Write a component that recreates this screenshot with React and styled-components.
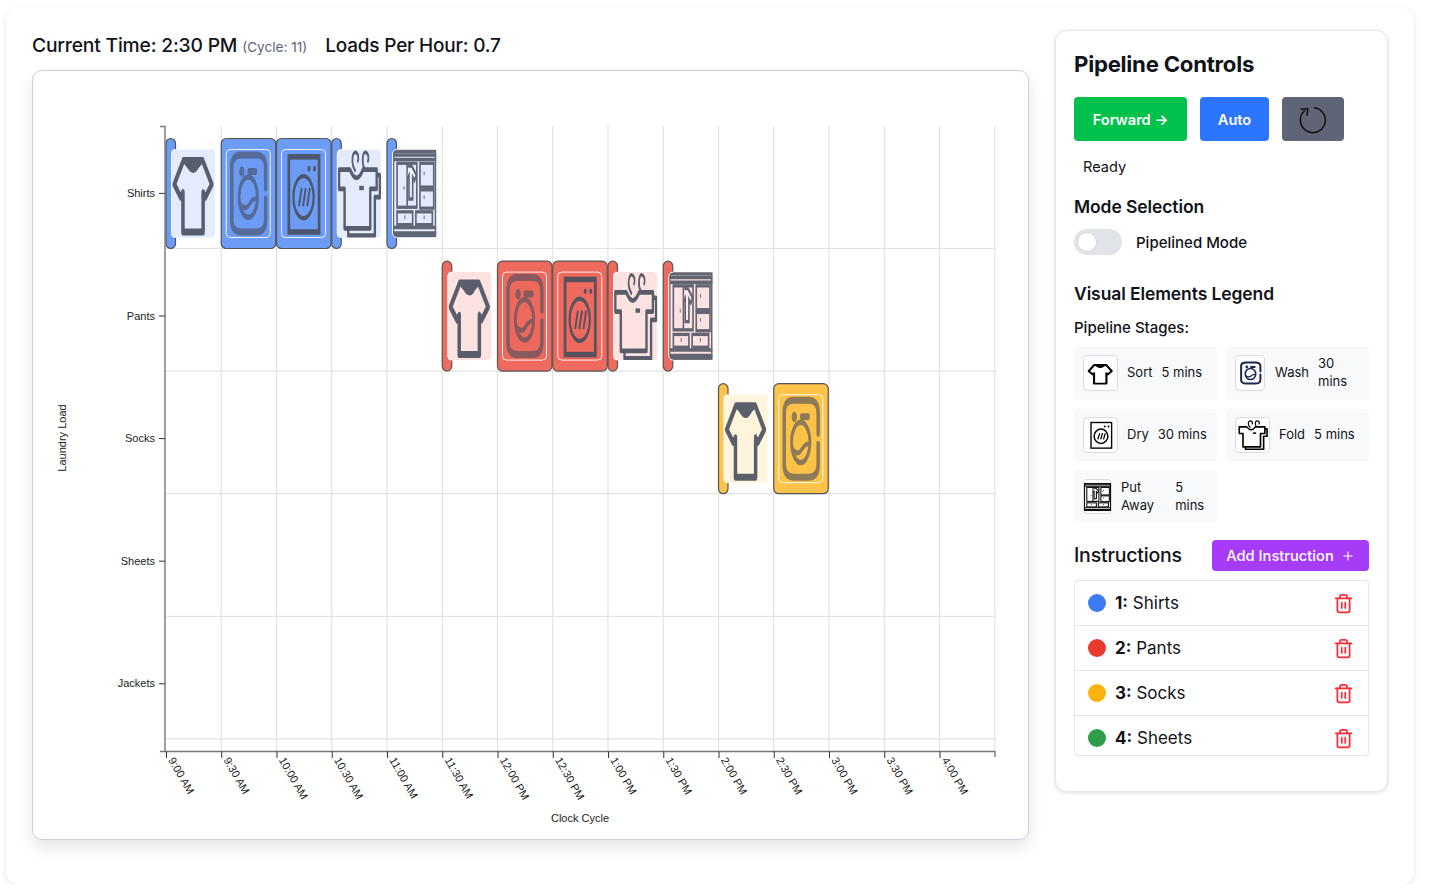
import React from "react";
import styled, { createGlobalStyle } from "styled-components";
import { Trash2, Plus } from "lucide-react";

const GlobalStyle = createGlobalStyle`
  html, body { margin: 0; padding: 0; background: #fff; }
  body { font-family: Inter, "Liberation Sans", sans-serif; color: #111318; overflow: hidden; }
`;

const Shell = styled.div`
  width: 1408px;
  height: 876px;
  margin: 8px 0 0 6px;
  padding: 22px 26px 0;
  box-sizing: border-box;
  display: grid;
  grid-template-columns: 997px 333px;
  column-gap: 26px;
  align-items: start;
  border-radius: 12px;
  background: #fff;
  box-shadow: 0 2px 6px rgba(0, 0, 0, 0.1);
`;

const Left = styled.div`
  display: flex;
  flex-direction: column;
`;

const StatusRow = styled.div`
  height: 40px;
  box-sizing: border-box;
  padding-bottom: 10px;
  display: flex;
  align-items: center;
  gap: 18px;
  font-size: 19.3px;
  letter-spacing: -0.2px;
  font-weight: 500;
  white-space: nowrap;
`;

const Cycle = styled.span`
  font-size: 13.6px;
  letter-spacing: 0;
  font-weight: 400;
  color: #5b6478;
  margin-left: 5px;
`;

const LoadsRate = styled.span`
  font-size: 19px;
`;

const ChartCard = styled.div`
  height: 770px;
  box-sizing: border-box;
  border: 1px solid #ccd0da;
  border-radius: 10px;
  background: #fff;
  box-shadow: 0 8px 16px rgba(0, 0, 0, 0.1);
`;

const ChartSvg = styled.svg`
  display: block;
  width: 995px;
  height: 767px;
`;

const Panel = styled.aside`
  height: 762px;
  box-sizing: border-box;
  padding: 18px 18px 0;
  border: 1px solid #e5e7eb;
  border-radius: 12px;
  background: #fff;
  box-shadow: 0 1px 4px rgba(0, 0, 0, 0.12);
`;

const Title = styled.h2`
  margin: 0;
  height: 30px;
  line-height: 30px;
  font-size: 22.2px;
  letter-spacing: -0.25px;
  font-weight: 700;
`;

const ButtonRow = styled.div`
  display: flex;
  gap: 13px;
  margin-top: 18px;
`;

const ActionButton = styled.button`
  width: ${(p) => p.$w}px;
  height: 44px;
  padding: 1px 0 0;
  display: flex;
  align-items: center;
  justify-content: center;
  border: none;
  border-radius: 4px;
  background: ${(p) => p.$bg};
  color: #fff;
  font-family: inherit;
  font-size: 14.6px;
  line-height: 20px;
  font-weight: 600;
`;

const StatusText = styled.div`
  margin: 16px 0 0 9px;
  line-height: 20px;
  font-size: 14.6px;
`;

const SectionTitle = styled.h3`
  margin: ${(p) => p.$top}px 0 0;
  line-height: 24px;
  font-size: 17.5px;
  letter-spacing: -0.1px;
  font-weight: 600;
`;

const ToggleRow = styled.div`
  display: flex;
  align-items: center;
  gap: 14px;
  margin-top: 10px;
  font-size: 15px;
  font-weight: 500;
`;

const ToggleTrack = styled.div`
  width: 48px;
  height: 26px;
  border-radius: 13px;
  background: #e0e3e8;
  display: flex;
  align-items: center;
  padding-left: 3px;
  box-sizing: border-box;
`;

const ToggleKnob = styled.div`
  width: 20px;
  height: 20px;
  border-radius: 50%;
  background: #fff;
  border: 1px solid #d4d7de;
  box-sizing: border-box;
`;

const SubTitle = styled.div`
  margin-top: 12px;
  line-height: 20px;
  font-size: 15px;
  font-weight: 500;
`;

const LegendGrid = styled.div`
  display: grid;
  grid-template-columns: 143px 143px;
  column-gap: 9px;
  row-gap: 9px;
  margin-top: 9px;
`;

const LegendItem = styled.div`
  height: 52.7px;
  box-sizing: border-box;
  padding: 0 9px;
  display: flex;
  align-items: center;
  border-radius: 4px;
  background: #f8f9fb;
  font-size: 13px;
  line-height: 18px;
`;

const IconBox = styled.div`
  width: ${(p) => p.$w}px;
  height: ${(p) => p.$h || 36}px;
  flex: none;
  box-sizing: border-box;
  display: flex;
  align-items: center;
  justify-content: center;
  margin-right: ${(p) => p.$gap}px;
  border: 1px solid #d9dce3;
  border-radius: 4px;
  background: #fff;
`;

const LegendName = styled.span`
  margin: 0 ${(p) => p.$gap}px 2px 0;
`;

const LegendTime = styled.span`
  margin-bottom: 2px;
`;

const InstructionsHead = styled.div`
  margin-top: 17px;
  display: flex;
  align-items: center;
  justify-content: space-between;
`;

const InstructionsTitle = styled.span`
  margin-bottom: 2px;
  font-size: 19.5px;
  font-weight: 500;
  letter-spacing: -0.2px;
`;

const AddButton = styled.button`
  width: 157px;
  height: 31px;
  padding: 0;
  display: flex;
  align-items: center;
  justify-content: center;
  gap: 7px;
  border: none;
  border-radius: 4px;
  background: #a63cf7;
  color: #fff;
  font-family: inherit;
  font-size: 14.7px;
  font-weight: 500;
`;

const InstructionList = styled.div`
  margin-top: 9px;
  height: 176px;
  box-sizing: border-box;
  overflow: hidden;
  border: 1px solid #e2e4ea;
  border-radius: 4px;
`;

const InstructionRow = styled.div`
  height: ${(p) => (p.$first ? 44 : 45)}px;
  box-sizing: border-box;
  padding: 0 14px 0 13px;
  display: flex;
  align-items: center;
  border-top: ${(p) => (p.$first ? "none" : "1px solid #e2e4ea")};
  font-size: 17px;
`;

const Dot = styled.span`
  width: 18px;
  height: 18px;
  border-radius: 50%;
  background: ${(p) => p.$color};
  margin-right: 9px;
`;

const RowLabel = styled.span`
  flex: 1;
  b { font-weight: 700; }
`;

// icons are drawn on a 48x48 box and stretched inside the chart cells
function ShirtIcon({ color = "#000", fill = "none" }) {
  return (
    <g fill={fill} stroke={color} strokeWidth="3.8" strokeLinejoin="round">
      <path d="M13 6H34L44 19L37 26L34.5 23.5V45H12.5V23.5L10 26L3 19Z" />
      <path d="M13 6H34L29 9Q24 14 18 9Z" fill={color} stroke={color} strokeWidth="2.4" />
    </g>
  );
}

function WasherIcon({ color = "#000" }) {
  return (
    <g fill="none" stroke={color} strokeWidth="3.8" strokeLinecap="round">
      <path d="M43 21V10Q43 3 33 3H16Q6 3 6 10V38Q6 45 16 45H33Q43 45 43 38V27" />
      <circle cx="17" cy="12" r="1" fill={color} />
      <path d="M25 12H32" />
      <ellipse cx="24" cy="26" rx="10" ry="11" strokeWidth="3" />
      <path d="M14.5 29Q20 34 25 30T33.5 27" strokeWidth="2.6" />
    </g>
  );
}

function DryerIcon({ color = "#000", weight = 3 }) {
  return (
    <g fill="none" stroke={color} strokeWidth={weight}>
      <rect x="8" y="4" width="33" height="41" />
      <circle cx="30" cy="10.5" r="1.6" fill={color} stroke="none" />
      <circle cx="36" cy="10.5" r="1.6" fill={color} stroke="none" />
      <ellipse cx="24" cy="26" rx="11" ry="11.5" strokeWidth="2.4" />
      <path d="M19 31L22 21M23.5 31L26.5 21M28 31L31 21" strokeWidth="2" />
    </g>
  );
}

function FoldIcon({ color = "#000", fill = "none" }) {
  return (
    <g fill="none" stroke={color} strokeWidth="2.6" strokeLinejoin="round">
      <path d="M43 14H46.5V26H41V47H12V43" />
      <path d="M2 11H14Q21 20 28 11H43V21.5H36V43H8V21.5H2Z" fill={fill} />
      <path d="M20 12C14 7 17 1 20 1.5C23 2 24 5 22 7M30 11C26 7 28 1 31 1.5C34 2 35 5 33 7" strokeWidth="1.9" />
      <path d="M24 21H29" strokeWidth="2.4" />
    </g>
  );
}

function WardrobeIcon({ color = "#000" }) {
  return (
    <g fill="none" stroke={color} strokeWidth="1.8">
      <rect x="1" y="1" width="46" height="46" />
      <path d="M0 3H48M0 5.5H48M0 42.5H48M0 45.5H48" strokeWidth="1.9" />
      <rect x="5" y="7.5" width="21.5" height="24" />
      <path d="M16 8V31" />
      <rect x="30" y="7.5" width="15" height="13" />
      <rect x="30" y="22" width="15" height="10" />
      <rect x="5" y="34" width="17" height="7" />
      <rect x="25.5" y="34" width="18" height="7" />
      <path d="M17 9H21L26 14L24 17L22 15V27H18V14L16 16" strokeWidth="1.8" fill="#fff" fillOpacity="0.5" />
      <path d="M34 13H35M34 26H35M12 21H13M13 37H14M34 37H35" strokeWidth="2" />
    </g>
  );
}

function ResetIcon() {
  return (
    <svg width="30" height="30" viewBox="0 0 30 30" fill="none" stroke="#111" strokeWidth="1.5" strokeLinecap="round" strokeLinejoin="round">
      <path d="M16.5 2.7A12.5 12.5 0 1 1 6.5 5.8" />
      <path d="M3.3 4.3L9.8 3.6L9.1 10.3" />
    </svg>
  );
}

const STAGE_ICONS = { sort: ShirtIcon, wash: WasherIcon, dry: DryerIcon, fold: FoldIcon, away: WardrobeIcon };

function LegendIcon({ kind, size = 30, height, color, weight }) {
  const Icon = STAGE_ICONS[kind];
  return (
    <svg viewBox="0 0 48 48" width={size} height={height || size} preserveAspectRatio="none">
      <Icon color={color} weight={weight} />
    </svg>
  );
}

const CLOCK = ["9:00 AM", "9:30 AM", "10:00 AM", "10:30 AM", "11:00 AM", "11:30 AM", "12:00 PM", "12:30 PM", "1:00 PM", "1:30 PM", "2:00 PM", "2:30 PM", "3:00 PM", "3:30 PM", "4:00 PM"];
const LOADS = ["Shirts", "Pants", "Socks", "Sheets", "Jackets"];

// chart is offset by the card's top-left corner (33,71)
const X0 = 133;
const STEP = 55.25;
const ROW_TOP = 55;
const ROW = 122.6;
const LINE_Y = 177.5;
const AXIS_Y = 680.5;

const runs = [
  { row: 0, start: 0, fill: "#6c9cf5", tint: "#e3ebfd", stages: ["sort", "wash", "dry", "fold", "away"] },
  { row: 1, start: 5, fill: "#ee6a5e", tint: "#fce3e1", stages: ["sort", "wash", "dry", "fold", "away"] },
  { row: 2, start: 10, fill: "#fdc34a", tint: "#fff4dc", stages: ["sort", "wash"] },
];

const INK_OPACITY = { sort: 0.9, wash: 0.62, dry: 0.9, fold: 0.9, away: 0.85 };

function StageCell({ kind, x, y, fill, tint }) {
  const Icon = STAGE_ICONS[kind];
  const wide = kind === "wash" || kind === "dry";
  const imgX = wide ? x + 5 : x + 5.5;
  const imgY = y + 11;
  const inner = { x: imgX, y: imgY, width: 44, height: 88 };
  return (
    <g>
      <rect x={x} y={y} width={wide ? 54.5 : 9.5} height={110} rx="5" fill={fill} stroke="#555" strokeWidth="1.2" />
      {!wide && <rect {...inner} width="43.5" rx="4" fill={tint} />}
      <svg x={imgX} y={imgY} width="44" height="88" viewBox="0 0 48 48" preserveAspectRatio="none">
        <g opacity={INK_OPACITY[kind]}>
          <Icon color="#494f5f" fill={kind === "sort" || kind === "fold" ? tint : "none"} />
        </g>
      </svg>
      <rect {...inner} rx="4" fill="none" stroke="#fff" strokeWidth="0.9" clipPath={wide ? undefined : "url(#leftEdge)"} />
    </g>
  );
}

function PipelineChart() {
  return (
    <ChartSvg viewBox="0 0 995 767">
      <defs>
        <clipPath id="leftEdge" clipPathUnits="objectBoundingBox">
          <rect x="-0.1" y="-0.1" width="0.2" height="1.2" />
        </clipPath>
      </defs>
      {CLOCK.map((_, i) => (
        <line key={i} x1={X0 + STEP * (i + 1)} x2={X0 + STEP * (i + 1)} y1={ROW_TOP} y2={AXIS_Y} stroke="#e2e2e2" strokeWidth="1.2" />
      ))}
      {LOADS.map((_, i) => (
        <line key={i} x1={X0} x2={962} y1={LINE_Y + ROW * i} y2={LINE_Y + ROW * i} stroke="#e2e2e2" strokeWidth="1.2" />
      ))}

      {runs.map((run) =>
        run.stages.map((kind, i) => (
          <StageCell
            key={kind}
            kind={kind}
            x={X0 + STEP * (run.start + i)}
            y={67.5 + ROW * run.row}
            fill={run.fill}
            tint={run.tint}
          />
        ))
      )}

      <path d="M127 55.5H132V680.5H127" fill="none" stroke="#777" strokeWidth="1.4" />
      <path d="M132 680.5H962V686" fill="none" stroke="#777" strokeWidth="1.4" />
      {LOADS.map((name, i) => (
        <g key={name}>
          <line x1={126} x2={132} y1={122.4 + ROW * i} y2={122.4 + ROW * i} stroke="#333" />
          <text x={122} y={125.9 + ROW * i} textAnchor="end" fontFamily="Liberation Sans" fontSize="11" fill="#222">{name}</text>
        </g>
      ))}
      {CLOCK.map((label, i) => {
        const x = X0 + STEP * i + 0.5;
        return (
          <g key={label}>
            <line x1={x} x2={x} y1={680.5} y2={687} stroke="#333" />
            <text transform={`translate(${x + 1.5} 689) rotate(60)`} fontFamily="Liberation Sans" fontSize="11" fill="#222">{label}</text>
          </g>
        );
      })}
      <text x={547} y={751} textAnchor="middle" fontFamily="Liberation Sans" fontSize="11" fill="#222">Clock Cycle</text>
      <text transform="translate(33 367) rotate(-90)" textAnchor="middle" fontFamily="Liberation Sans" fontSize="11" fill="#222">Laundry Load</text>
    </ChartSvg>
  );
}

const instructions = [
  { id: 1, name: "Shirts", color: "#3b7cf6" },
  { id: 2, name: "Pants", color: "#ea3a30" },
  { id: 3, name: "Socks", color: "#fdb20e" },
  { id: 4, name: "Sheets", color: "#2e9e4a" },
];

export default function App() {
  return (
    <>
      <GlobalStyle />
      <Shell>
        <Left>
          <StatusRow>
            <span>Current Time: 2:30 PM<Cycle>(Cycle: 11)</Cycle></span>
            <LoadsRate>Loads Per Hour: 0.7</LoadsRate>
          </StatusRow>
          <ChartCard>
            <PipelineChart />
          </ChartCard>
        </Left>
        <Panel>
          <Title>Pipeline Controls</Title>
          <ButtonRow>
            <ActionButton $w={113} $bg="#00c14b">Forward →</ActionButton>
            <ActionButton $w={69} $bg="#2b76fd">Auto</ActionButton>
            <ActionButton $w={62} $bg="#5f6577"><ResetIcon /></ActionButton>
          </ButtonRow>
          <StatusText>Ready</StatusText>
          <SectionTitle $top={18}>Mode Selection</SectionTitle>
          <ToggleRow>
            <ToggleTrack><ToggleKnob /></ToggleTrack>
            Pipelined Mode
          </ToggleRow>
          <SectionTitle $top={27}>Visual Elements Legend</SectionTitle>
          <SubTitle>Pipeline Stages:</SubTitle>
          <LegendGrid>
            <LegendItem>
              <IconBox $w={35} $gap={9}><LegendIcon kind="sort" size={27} height={23} /></IconBox>
              <LegendName $gap={9}>Sort</LegendName>
              <LegendTime>5 mins</LegendTime>
            </LegendItem>
            <LegendItem>
              <IconBox $w={30} $gap={10}><LegendIcon kind="wash" size={25} height={24} color="#1a2550" /></IconBox>
              <LegendName $gap={9}>Wash</LegendName>
              <LegendTime>30<br />mins</LegendTime>
            </LegendItem>
            <LegendItem>
              <IconBox $w={35} $gap={9}><LegendIcon kind="dry" weight={2.2} /></IconBox>
              <LegendName $gap={9}>Dry</LegendName>
              <LegendTime>30 mins</LegendTime>
            </LegendItem>
            <LegendItem>
              <IconBox $w={35} $gap={9}><LegendIcon kind="fold" /></IconBox>
              <LegendName $gap={9}>Fold</LegendName>
              <LegendTime>5 mins</LegendTime>
            </LegendItem>
            <LegendItem>
              <IconBox $w={29} $h={35} $gap={9}><LegendIcon kind="away" size={27} height={28} /></IconBox>
              <LegendName $gap={21}>Put<br />Away</LegendName>
              <LegendTime>5<br />mins</LegendTime>
            </LegendItem>
          </LegendGrid>
          <InstructionsHead>
            <InstructionsTitle>Instructions</InstructionsTitle>
            <AddButton>Add Instruction <Plus size={14} /></AddButton>
          </InstructionsHead>
          <InstructionList>
            {instructions.map((item, i) => (
              <InstructionRow key={item.id} $first={i === 0}>
                <Dot $color={item.color} />
                <RowLabel><b>{item.id}:</b> {item.name}</RowLabel>
                <Trash2 size={21} color="#fb2c36" strokeWidth={2} />
              </InstructionRow>
            ))}
          </InstructionList>
        </Panel>
      </Shell>
    </>
  );
}
